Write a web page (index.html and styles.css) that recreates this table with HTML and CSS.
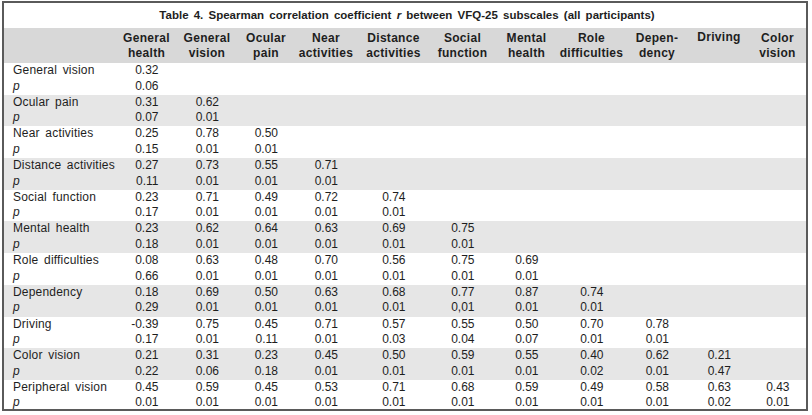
FILE: index.html
```html
<!DOCTYPE html>
<html lang="en">
<head>
<meta charset="utf-8">
<title>Table 4</title>
<link rel="stylesheet" href="styles.css">
</head>
<body>
<div class="frame">
  <div class="caption">Table 4. Spearman correlation coefficient <i>r</i> between VFQ-25 subscales (all participants)</div>
  <table class="corr">
    <colgroup>
      <col class="w-label"><col class="w1"><col class="w2"><col class="w3"><col class="w4"><col class="w5"><col class="w6"><col class="w7"><col class="w8"><col class="w9"><col class="w10"><col class="w11">
    </colgroup>
    <thead>
      <tr>
        <th></th>
        <th>General<br>health</th>
        <th>General<br>vision</th>
        <th>Ocular<br>pain</th>
        <th>Near<br>activities</th>
        <th>Distance<br>activities</th>
        <th>Social<br>function</th>
        <th>Mental<br>health</th>
        <th>Role<br>difficulties</th>
        <th>Depen-<br>dency</th>
        <th class="top">Driving</th>
        <th>Color<br>vision</th>
      </tr>
    </thead>
    <tbody id="rows"></tbody>
  </table>
</div>
<script src="app.js"></script>
</body>
</html>
```

FILE: app.js
```js
const data = [
  ["General vision", ["0.32"], ["0.06"]],
  ["Ocular pain", ["0.31","0.62"], ["0.07","0.01"]],
  ["Near activities", ["0.25","0.78","0.50"], ["0.15","0.01","0.01"]],
  ["Distance activities", ["0.27","0.73","0.55","0.71"], ["0.11","0.01","0.01","0.01"]],
  ["Social function", ["0.23","0.71","0.49","0.72","0.74"], ["0.17","0.01","0.01","0.01","0.01"]],
  ["Mental health", ["0.23","0.62","0.64","0.63","0.69","0.75"], ["0.18","0.01","0.01","0.01","0.01","0.01"]],
  ["Role difficulties", ["0.08","0.63","0.48","0.70","0.56","0.75","0.69"], ["0.66","0.01","0.01","0.01","0.01","0.01","0.01"]],
  ["Dependency", ["0.18","0.69","0.50","0.63","0.68","0.77","0.87","0.74"], ["0.29","0.01","0.01","0.01","0.01","0,01","0.01","0.01"]],
  ["Driving", ["-0.39","0.75","0.45","0.71","0.57","0.55","0.50","0.70","0.78"], ["0.17","0.01","0.11","0.01","0.03","0.04","0.07","0.01","0.01"]],
  ["Color vision", ["0.21","0.31","0.23","0.45","0.50","0.59","0.55","0.40","0.62","0.21"], ["0.22","0.06","0.18","0.01","0.01","0.01","0.01","0.02","0.01","0.47"]],
  ["Peripheral vision", ["0.45","0.59","0.45","0.53","0.71","0.68","0.59","0.49","0.58","0.63","0.43"], ["0.01","0.01","0.01","0.01","0.01","0.01","0.01","0.01","0.01","0.02","0.01"]]
];
const tbody = document.getElementById("rows");
data.forEach(([label, r, p], i) => {
  const tr = document.createElement("tr");
  if (i % 2 === 1) tr.className = "alt";
  const th = document.createElement("td");
  th.className = "label";
  th.innerHTML = label + "<br><i>p</i>";
  tr.appendChild(th);
  for (let c = 0; c < 11; c++) {
    const td = document.createElement("td");
    td.className = "val";
    if (c < r.length) {
      td.innerHTML = '<span class="num">' + r[c] + '</span><br><span class="num">' + p[c] + '</span>';
    }
    tr.appendChild(td);
  }
  tbody.appendChild(tr);
});
```

FILE: styles.css
```css
html, body {
  margin: 0;
  padding: 0;
  background: #fff;
}
body {
  font-family: "Liberation Sans", Arial, Helvetica, sans-serif;
  color: #1e1e1e;
}
.frame {
  box-sizing: border-box;
  width: 806px;
  height: 410px;
  margin: 1px 0 0 2px;
  border: 2px solid #5a5a5a;
  overflow: hidden;
}
.caption {
  height: 25px;
  line-height: 25px;
  text-align: center;
  font-weight: bold;
  font-size: 11.5px;
  word-spacing: 2px;
  padding-left: 4px;
}
.corr {
  border-collapse: collapse;
  table-layout: fixed;
  width: 802px;
}
.w-label { width: 112px; }
.w1 { width: 61px; }
.w2 { width: 60px; }
.w3 { width: 58px; }
.w4 { width: 62px; }
.w5 { width: 73px; }
.w6 { width: 65px; }
.w7 { width: 63px; }
.w8 { width: 67px; }
.w9 { width: 64px; }
.w10 { width: 60px; }
.w11 { width: 57px; }
.corr thead tr {
  background: #d8d8d8;
}
.corr th {
  height: 33px;
  padding: 0;
  font-size: 12px;
  font-weight: bold;
  line-height: 15px;
  text-align: center;
  vertical-align: middle;
  white-space: nowrap;
  letter-spacing: 0.3px;
}
.corr th.top {
  vertical-align: top;
  padding-top: 2px;
}
.corr td {
  padding: 0;
  height: 31.7px;
  font-size: 12px;
  line-height: 15.5px;
  vertical-align: top;
  white-space: nowrap;
}
.corr tr.alt {
  background: #e6e6e6;
}
.corr td.label {
  padding-left: 9px;
  word-spacing: 2px;
  letter-spacing: 0.2px;
}
.corr td.val {
  text-align: center;
}
.num {
  display: inline-flex;
  justify-content: flex-end;
  width: 24px;
}
```
